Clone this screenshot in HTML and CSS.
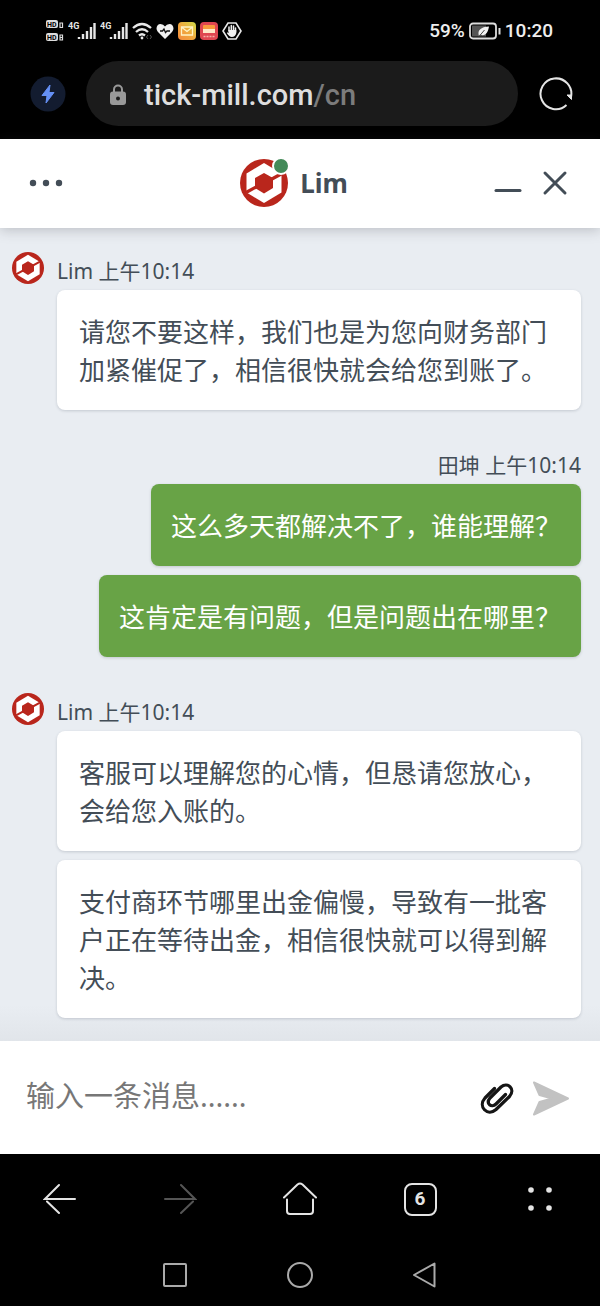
FILE: index.html
```html
<!DOCTYPE html>
<html lang="zh-CN">
<head>
<meta charset="utf-8">
<meta name="viewport" content="width=device-width, initial-scale=1">
<title>Lim</title>
<link rel="stylesheet" href="styles.css">
</head>
<body>
<svg width="0" height="0" class="defs" aria-hidden="true">
  <symbol id="logo" viewBox="0 0 48 48">
    <circle cx="24" cy="24" r="24" fill="#b9261c"/>
    <path d="M24 4 L41.500 14.500 V33.500 L24 44 L6.500 33.500 V14.500 Z" fill="#fff"/>
    <path d="M24 14 L33 19 V29 L24 34.500 L15 29 V19 Z" fill="#b9261c"/>
    <path d="M6 33.500 L17 27.500 M31 20.500 L42 14.500" stroke="#b9261c" stroke-width="3.200"/>
  </symbol>
</svg>
<div class="screen">
  <div class="status">
    <div class="status-icons">
      <svg width="18" height="24" viewBox="0 0 18 24">
        <rect x="0" y="1" width="12" height="8" rx="2" fill="#ddd"/><rect x="0" y="14" width="12" height="8" rx="2" fill="#ddd"/>
        <text x="1" y="8" class="hd">HD</text><text x="1" y="21" class="hd">HD</text>
        <path d="M14 4h2.500v4.500H14zM14 16h2.500v5H14zM14 18.500h2.500" fill="none" stroke="#ddd" stroke-width="1.200"/>
      </svg>
      <svg width="28" height="24" viewBox="0 0 28 24"><text x="0" y="10" class="net">4G</text><path d="M11 20v-2M15 20v-5M19 20v-8M23 20V8M26.500 20V4" stroke="#e6e6e6" stroke-width="2.400"/></svg>
      <svg width="28" height="24" viewBox="0 0 28 24"><text x="0" y="10" class="net">4G</text><path d="M11 20v-2M15 20v-5M19 20v-8M23 20V8M26.500 20V4" stroke="#e6e6e6" stroke-width="2.400"/></svg>
      <svg width="20" height="24" viewBox="0 0 20 24" fill="none" stroke="#e8e8e8" stroke-width="2.300"><path d="M1 9q9-8 18 0M4 13q6-5.500 12 0M7 16.500q3-2.500 6 0"/><circle cx="10" cy="19" r="1.400" fill="#e8e8e8" stroke="none"/><path d="M16 16l-1.500 2 1.500 2M18 16l1.500 2-1.500 2" stroke="#555" stroke-width="1"/></svg>
      <svg width="18" height="24" viewBox="0 0 18 24"><path d="M9 20L2 13C-1 9.500 1 5 4.500 5Q7.500 5 9 7.500Q10.500 5 13.500 5C17 5 19 9.500 16 13Z" fill="#f0f0f0"/><path d="M4 12h2.500l1.500-2 1.500 3.500 1.500-1.500h3" fill="none" stroke="#111" stroke-width="1.300"/></svg>
      <svg width="18" height="24" viewBox="0 0 18 24"><defs><linearGradient id="mail" x1="0" y1="1" x2="1" y2="0"><stop offset="0" stop-color="#f58a3c"/><stop offset=".5" stop-color="#f0a93c"/><stop offset="1" stop-color="#cfdc4a"/></linearGradient></defs><rect y="3" width="18" height="18" rx="4" fill="url(#mail)"/><path d="M3.500 8h11v8h-11zM4 8.500l5 4 5-4" fill="none" stroke="#fff3c4" stroke-width="1.300"/></svg>
      <svg width="18" height="24" viewBox="0 0 18 24"><rect y="3" width="18" height="18" rx="4" fill="#df4650"/><rect x="3" y="6" width="12" height="5" rx="1" fill="#f99a3c"/><rect x="3" y="10" width="12" height="4" fill="#ffe7c8"/><path d="M3.500 17.500h11" stroke="#f6b0a8" stroke-width="1.500" stroke-dasharray="2 1"/></svg>
      <svg width="20" height="24" viewBox="0 0 20 24"><path d="M6 4h8l5 8-5 8H6l-5-8z" fill="none" stroke="#e8e8e8" stroke-width="1.600"/><path d="M7 12V8M9.300 12V6.500M11.500 12V7M13.500 13V9" stroke="#f0f0f0" stroke-width="1.500" stroke-linecap="round"/><path d="M6.300 11h8v3q-1 4-4.500 4-2.500 0-5-4l1-.8 1 .8z" fill="#f0f0f0"/></svg>
    </div>
    <div class="status-info">
      <span>59%</span>
      <svg width="32" height="18" viewBox="0 0 32 18"><rect x="1" y="1.500" width="26" height="15" rx="3" fill="none" stroke="#ddd" stroke-width="1.800"/><rect x="3" y="3.500" width="14" height="11" fill="#555"/><path d="M10 14C8 8 12 5 20 4.500C19 11 16 15 11 12.500M10 14L16 8" fill="#f2f2f2"/><path d="M10 14.500L15.500 8" stroke="#444"/><path d="M30.500 6v6.500" stroke="#ddd" stroke-width="2"/></svg>
      <span>10:20</span>
    </div>
  </div>

  <div class="address">
    <button class="icon-btn bolt" aria-label="加速"><svg width="36" height="36" viewBox="0 0 36 36"><circle cx="18" cy="18" r="17.500" fill="#131c30"/><path d="M20 9l-8 10.500h5L16 27l8-10.500h-5z" fill="#6590f5" stroke="#6590f5" stroke-linejoin="round"/></svg></button>
    <div class="pill">
      <svg width="18" height="24" viewBox="0 0 18 24"><path d="M5 10V6.500a4 4 0 0 1 8 0V10" fill="none" stroke="#999" stroke-width="2"/><rect x="1" y="8.500" width="16" height="13.500" rx="3" fill="#999"/><circle cx="9" cy="15.500" r="2" fill="#1b1b1b"/></svg>
      <div class="url">tick-mill.com<span class="path">/cn</span></div>
    </div>
    <button class="icon-btn" aria-label="刷新"><svg width="36" height="36" viewBox="0 0 36 36" fill="none" stroke="#e4e4e4" stroke-width="2"><path d="M28.500 29a15.400 15.400 0 1 1 4.500-8"/><path d="M29 19h4.500v4.500z" fill="#e4e4e4" stroke-width="1"/></svg></button>
  </div>

  <header class="chat-head">
    <button class="icon-btn menu" aria-label="菜单"><svg width="34" height="8" viewBox="0 0 34 8" fill="#434d57"><circle cx="4" cy="4" r="3.200"/><circle cx="17" cy="4" r="3.200"/><circle cx="30" cy="4" r="3.200"/></svg></button>
    <div class="agent">
      <span class="agent-logo"><svg width="48" height="48"><use href="#logo"/></svg><i class="online"></i></span>
      <h1 class="agent-name">Lim</h1>
    </div>
    <div class="window-btns">
      <button class="icon-btn" aria-label="最小化"><svg width="28" height="26" viewBox="0 0 28 26"><path d="M2 20.500h24" stroke="#434d57" stroke-width="3" stroke-linecap="round"/></svg></button>
      <button class="icon-btn" aria-label="关闭"><svg width="26" height="26" viewBox="0 0 26 26"><path d="M3 3l20 20M23 3L3 23" stroke="#434d57" stroke-width="3" stroke-linecap="round"/></svg></button>
    </div>
  </header>

  <main class="chat">
    <section class="group">
      <svg class="avatar" width="32" height="32"><use href="#logo"/></svg>
      <div class="body">
        <div class="meta">Lim 上午10:14</div>
        <p class="bubble">请您不要这样，我们也是为您向财务部门加紧催促了，相信很快就会给您到账了。</p>
      </div>
    </section>
    <section class="group">
      <div class="body own">
        <div class="meta">田坤 上午10:14</div>
        <p class="bubble">这么多天都解决不了，谁能理解？</p>
        <p class="bubble">这肯定是有问题，但是问题出在哪里？</p>
      </div>
    </section>
    <section class="group">
      <svg class="avatar" width="32" height="32"><use href="#logo"/></svg>
      <div class="body">
        <div class="meta">Lim 上午10:14</div>
        <p class="bubble">客服可以理解您的心情，但恳请您放心，会给您入账的。</p>
        <p class="bubble">支付商环节哪里出金偏慢，导致有一批客户正在等待出金，相信很快就可以得到解决。</p>
      </div>
    </section>
  </main>

  <form class="composer">
    <input class="message" type="text" aria-label="消息" placeholder="输入一条消息......">
    <button type="button" class="icon-btn" aria-label="附件"><svg width="36" height="36" viewBox="0 0 36 36"><path d="M14.500 8.500L5 18C-2.500 26.500 7.500 37 16 29.500L29.500 16.500C36 9 27.500 1.500 21 7L10 18C5.500 23.500 11.500 28.500 16 24L25.500 14.500" fill="none" stroke="#151515" stroke-width="3.200" stroke-linecap="round" stroke-linejoin="round"/></svg></button>
    <button type="button" class="icon-btn" aria-label="发送"><svg width="38" height="36" viewBox="0 0 38 36"><path d="M2 2.500L36 18.500L2 34.500L7.500 22L20 18.500L7.500 15Z" fill="#c2c2c2" stroke="#c2c2c2" stroke-width="2" stroke-linejoin="round"/></svg></button>
  </form>

  <nav class="browser-nav">
    <button class="icon-btn" aria-label="后退"><svg width="34" height="34" viewBox="0 0 34 34" fill="none" stroke="#e4e4e4" stroke-width="2" stroke-linecap="round"><path d="M32 17H2L16 3M4 19.500L16 31"/></svg></button>
    <button class="icon-btn" aria-label="前进"><svg width="34" height="34" viewBox="0 0 34 34" fill="none" stroke="#555" stroke-width="2" stroke-linecap="round"><path d="M2 17h30L18 3M30 19.500L18 31"/></svg></button>
    <button class="icon-btn" aria-label="主页"><svg width="36" height="34" viewBox="0 0 36 34" fill="none" stroke="#e4e4e4" stroke-width="2" stroke-linecap="round" stroke-linejoin="round"><path d="M2 15.500L15.500 2.500Q18 .5 20.500 2.500L34 15.500M5 17.500V29q0 3 3 3h20q3 0 3-3V17.500"/></svg></button>
    <button class="icon-btn tabs" aria-label="标签页">6</button>
    <button class="icon-btn" aria-label="更多"><svg width="26" height="26" viewBox="0 0 26 26" fill="#e4e4e4"><circle cx="4" cy="4" r="2.800"/><circle cx="22" cy="4" r="2.800"/><circle cx="4" cy="22" r="2.800"/><circle cx="22" cy="22" r="2.800"/></svg></button>
  </nav>
  <nav class="system-nav">
    <button class="icon-btn" aria-label="最近任务"><svg width="26" height="26" viewBox="0 0 26 26" fill="none" stroke="#aaa" stroke-width="2"><rect x="2" y="2" width="22" height="22" rx="1"/></svg></button>
    <button class="icon-btn" aria-label="桌面"><svg width="26" height="26" viewBox="0 0 26 26" fill="none" stroke="#aaa" stroke-width="2"><circle cx="13" cy="13" r="12"/></svg></button>
    <button class="icon-btn" aria-label="返回"><svg width="26" height="26" viewBox="0 0 26 26" fill="none" stroke="#aaa" stroke-width="2" stroke-linejoin="round"><path d="M22.500 1.500v23L2 13z"/></svg></button>
  </nav>
</div>
</body>
</html>
```
FILE: styles.css
```css
* { box-sizing: border-box; }
body {
  margin: 0;
  background: #000;
  color: #434d57;
  font-family: "Noto Sans", "Noto Sans CJK SC", sans-serif;
}
svg { display: block; flex: none; }
.defs { position: absolute; }
.screen { display: flex; flex-direction: column; min-height: 100vh; }
.icon-btn {
  display: flex;
  align-items: center;
  justify-content: center;
  padding: 0;
  border: 0;
  background: none;
  flex: none;
}

.status {
  display: flex;
  align-items: center;
  justify-content: space-between;
  height: 61px;
  padding: 1px 47px 0 46px;
}
.status-icons { display: flex; gap: 4px; }
.hd { font: bold 7px Roboto, sans-serif; fill: #000; }
.net { font: bold 9px Roboto, sans-serif; fill: #e6e6e6; }
.status-info {
  display: flex;
  align-items: center;
  gap: 4px;
  color: #eee;
  font: 500 19px/24px Roboto, sans-serif;
}

.address {
  display: flex;
  align-items: center;
  padding: 0 26px 13px 30px;
}
.bolt { margin-right: 20px; }
.pill {
  display: flex;
  align-items: center;
  flex: 1;
  gap: 17px;
  height: 65px;
  margin-right: 20px;
  padding: 2px 23px 0;
  border-radius: 33px;
  background: #1b1b1b;
}
.url { color: #dedede; font: 500 29px/40px Roboto, sans-serif; }
.path { color: #7c7c7c; }

.chat-head {
  display: grid;
  grid-template-columns: 1fr auto 1fr;
  align-items: center;
  height: 89px;
  padding: 0 32px 1px 20px;
  background: #fff;
  box-shadow: 0 2px 12px rgba(50, 50, 60, 0.25);
  z-index: 1;
}
.menu { justify-self: start; padding-left: 9px; }
.agent { display: flex; align-items: center; gap: 12px; }
.agent-logo { position: relative; }
.online {
  position: absolute;
  top: -2px;
  right: -2px;
  width: 18px;
  height: 18px;
  border: 2px solid #fff;
  border-radius: 50%;
  background: #438a58;
}
.agent-name { margin: 0; font-size: 26px; line-height: 36px; font-weight: 700; }
.window-btns { display: flex; justify-content: flex-end; gap: 20px; }

.chat {
  display: flex;
  flex: 1;
  flex-direction: column;
  gap: 36px;
  padding: 24px 19px 22px 12px;
  background: linear-gradient(to top, #e1e5ea, #e9edf2 36px);
}
.group { display: flex; align-items: flex-start; gap: 13px; }
.body { display: flex; flex: 1; flex-direction: column; gap: 9px; }
.meta { padding-top: 5px; margin-bottom: -4px; font-size: 21px; line-height: 28px; }
.bubble {
  margin: 0;
  padding: 23px 22px 21px;
  border-radius: 8px;
  background: #fff;
  box-shadow: 0 1px 3px rgba(50, 60, 80, 0.2);
  font-size: 26px;
  line-height: 38px;
}
.own { align-items: flex-end; }
.own .bubble { padding: 23px 20px 21px; background: #68a346; color: #fff; }

.composer {
  display: flex;
  align-items: center;
  gap: 16px;
  height: 113px;
  padding: 0 30px 0 26px;
  background: #fff;
}
.message {
  flex: 1;
  min-width: 0;
  padding: 0 0 3px;
  border: 0;
  outline: 0;
  background: none;
  color: #434d57;
  font: 29px/42px "Noto Sans", "Noto Sans CJK SC", sans-serif;
}
.message::placeholder { color: #777; opacity: 1; }

.browser-nav {
  display: grid;
  grid-template-columns: repeat(5, 1fr);
  place-items: center;
  height: 90px;
}
.tabs {
  width: 33px;
  height: 33px;
  border: 2px solid #e4e4e4;
  border-radius: 8px;
  color: #e4e4e4;
  font: 700 19px/24px Roboto, sans-serif;
}
.system-nav {
  display: grid;
  grid-template-columns: repeat(3, 1fr);
  place-items: center;
  height: 62px;
  padding: 0 112px;
}
```
